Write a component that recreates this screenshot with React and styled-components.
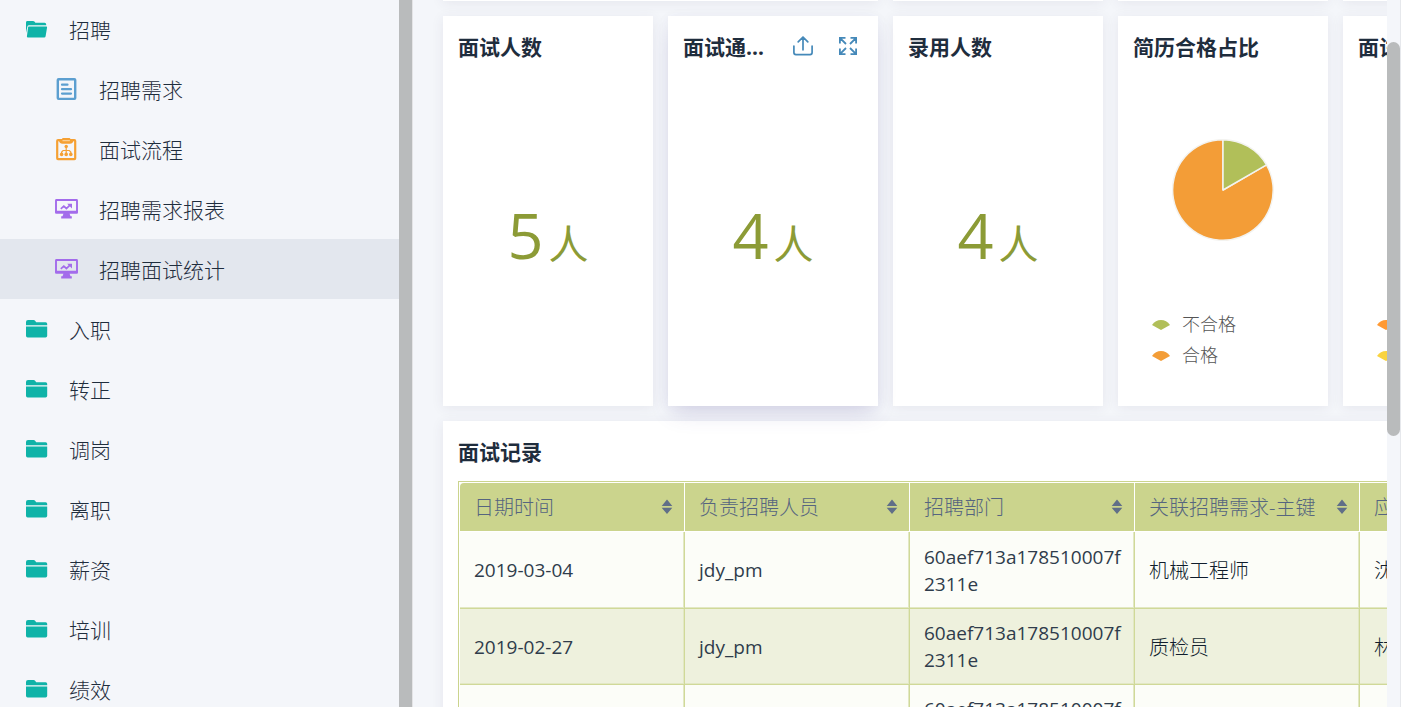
import { useState } from 'react';
import styled, { createGlobalStyle } from 'styled-components';

const GlobalStyle = createGlobalStyle`
  * {
    box-sizing: border-box;
  }
  body {
    margin: 0;
    background: #fff;
    color: #1f2d3d;
    font-family: "Open Sans", "Noto Sans CJK SC", sans-serif;
    overflow: hidden;
  }
`;

const TEAL = '#0fb3a8';
const BLUE = '#5c9fd0';
const ORANGE = '#f5a033';
const PURPLE = '#a36ceb';

const FolderIcon = () => (
    <svg width="24" height="20" viewBox="-2 0 24 20" fill={TEAL}>
        <path d="M0 6.2V3Q0 1 2 1h5.6q.8 0 1.3.6l1.3 1.6H19.600q1.600 0 1.600 1.600v1.400z" />
        <path d="M0 7.400h21.200v9.400q0 1.700-1.700 1.700H1.700Q0 18.500 0 16.800z" />
    </svg>
);

const OpenFolderIcon = () => (
    <svg width="24" height="20" viewBox="-2 0 24 20" fill={TEAL}>
        <path d="M0 14V3.400Q0 2 1.400 2H7q1 0 1.400.6l1 1.200h9.200q1.600 0 1.600 1.600v.8H3.200q-1.600 0-1.800 1.400z" />
        <path d="M2.800 7.400h17.600q.8 0 .7.8l-1.500 9q-.2 1.200-1.400 1.200H1.600q-.8 0-.7-.8l1.200-9.400q.1-.8.7-.8z" />
    </svg>
);

const FormIcon = () => (
    <svg width="24" height="24" viewBox="0 0 24 24" fill="none" stroke={BLUE} strokeWidth="2.400">
        <rect x="3.800" y="2.200" width="17.400" height="19.700" rx=".8" />
        <path d="M8 7.700h5.500M8 12.200h9M8 16.600h9" strokeWidth="2.200" strokeLinecap="round" />
    </svg>
);

const FlowIcon = () => (
    <svg width="24" height="24" viewBox="0 0 24 24" fill="none" stroke={ORANGE}>
        <rect x="3.200" y="3.100" width="18" height="19" rx=".8" strokeWidth="2.200" />
        <path d="M8 3V2q0-1 1.200-1h6q1.200 0 1.200 1v1h3q0 3.800-3.600 3.800H8.600Q5 6.800 5 3z" fill={ORANGE} stroke="none" />
        <path d="M8.500 3.700h7.400" stroke="#fbd9ab" strokeWidth="1" />
        <path d="M12.200 9.500v7.500M7.600 17v-2l1.500-1.500h6.200l1.500 1.500v2" strokeWidth="1.200" />
        <g fill={ORANGE} stroke="none">
            <circle cx="12.200" cy="9.400" r="1.700" />
            <circle cx="7.600" cy="17.400" r="1.800" />
            <circle cx="12.200" cy="17.400" r="1.800" />
            <circle cx="16.800" cy="17.400" r="1.800" />
        </g>
    </svg>
);

const ReportIcon = () => (
    <svg width="24" height="24" viewBox="0 0 24 24" fill="none" stroke={PURPLE}>
        <rect x="2" y="3" width="21" height="12.500" rx=".4" strokeWidth="1.900" />
        <path d="M1.200 13.800h22.600v2.700H1.200zM9.500 16.500h6l1 2.700h1.300V21.500H7.200v-2.300h1.300z" fill={PURPLE} stroke="none" />
        <path d="M6.800 11.800l3-2.600 2.600 2.300 3.800-3.600" strokeWidth="1.700" />
        <path d="M13.200 6.800h4.800v4.800z" fill={PURPLE} stroke="none" />
    </svg>
);

const ExportIcon = () => (
    <svg width="20" height="20" viewBox="0 0 20 20" fill="none" stroke="currentColor" strokeWidth="1.700" strokeLinecap="round" strokeLinejoin="round">
        <path d="M.9 10v6.600q0 2 2 2h14.200q2 0 2-2V10M10 13.800V1.200M5.200 5.800L10 1l4.800 4.800" />
    </svg>
);

const ExpandIcon = () => (
    <svg width="20" height="20" viewBox="0 0 20 20" fill="none" stroke="currentColor" strokeWidth="1.800">
        <path d="M7.500 1.900H1.900v5.600M1.900 1.900L8 8M12.500 1.900h5.600v5.600M18.100 1.900L12 8M7.500 18.100H1.900v-5.600M1.900 18.100L8 12M12.500 18.100h5.600v-5.600M18.100 18.100L12 12" />
    </svg>
);

const SortIcon = () => (
    <svg width="12" height="16" viewBox="0 0 12 16" fill="#606f88">
        <path d="M6 .5L11.300 7H.7zM.7 8.800h10.600L6 15z" />
    </svg>
);

const PieChart = () => (
    <svg width="102" height="102" viewBox="0 0 102 102" stroke="#f3f3f0" strokeWidth="1.500" strokeLinejoin="round">
        <path d="M51 51V.7A50.300 50.300 0 1 0 94.500 25.900z" fill="#f39d37" />
        <path d="M51 51V.7A50.300 50.300 0 0 1 94.500 25.900z" fill="#b1bf59" />
    </svg>
);

const LegendMark = ({ color }) => (
    <svg width="18" height="10" viewBox="0 0 18 10" fill={color}>
        <path d="M0 5Q3.500 0 9 0t9 5l-9 5z" />
    </svg>
);

const menu = [
    { name: '招聘', icon: OpenFolderIcon },
    { name: '招聘需求', icon: FormIcon, child: true },
    { name: '面试流程', icon: FlowIcon, child: true },
    { name: '招聘需求报表', icon: ReportIcon, child: true },
    { name: '招聘面试统计', icon: ReportIcon, child: true },
    { name: '入职', icon: FolderIcon },
    { name: '转正', icon: FolderIcon },
    { name: '调岗', icon: FolderIcon },
    { name: '离职', icon: FolderIcon },
    { name: '薪资', icon: FolderIcon },
    { name: '培训', icon: FolderIcon },
    { name: '绩效', icon: FolderIcon },
];

// latin columns hold dates, accounts and ids
const columns = [
    { name: '日期时间', latin: true },
    { name: '负责招聘人员', latin: true },
    { name: '招聘部门', latin: true },
    { name: '关联招聘需求-主键' },
    { name: '应聘者' },
];

const records = [
    ['2019-03-04', 'jdy_pm', '60aef713a178510007f2311e', '机械工程师', '沈'],
    ['2019-02-27', 'jdy_pm', '60aef713a178510007f2311e', '质检员', '林'],
    ['', '', '60aef713a178510007f2311e', '', ''],
];

const NumberCard = ({ title, value, active }) => (
    <Card $active={active}>
        <CardHead>
            <CardTitle>{title}</CardTitle>
            {active && (
                <Tools>
                    <ToolButton type="button" aria-label="导出"><ExportIcon /></ToolButton>
                    <ToolButton type="button" aria-label="全屏"><ExpandIcon /></ToolButton>
                </Tools>
            )}
        </CardHead>
        <Figure>
            {value}
            <Unit>人</Unit>
        </Figure>
    </Card>
);

const PieCard = ({ title, legend }) => (
    <Card>
        <CardHead>
            <CardTitle>{title}</CardTitle>
        </CardHead>
        <ChartArea>
            <PieChart />
        </ChartArea>
        <Legend>
            {legend.map((item) => (
                <LegendItem key={item.name}>
                    <LegendMark color={item.color} />
                    <LegendText>{item.name}</LegendText>
                </LegendItem>
            ))}
        </Legend>
    </Card>
);

const App = () => {
    const [current, setCurrent] = useState('招聘面试统计');

    return (
        <Page>
            <GlobalStyle />
            <Sidebar>
                {menu.map(({ name, icon: Icon, child }) => (
                    <MenuItem
                        key={name}
                        type="button"
                        $child={child}
                        $active={name === current}
                        onClick={() => setCurrent(name)}
                    >
                        <MenuIcon><Icon /></MenuIcon>
                        <MenuText>{name}</MenuText>
                    </MenuItem>
                ))}
            </Sidebar>
            <SideScrollbar />
            <Main>
                <Board>
                    <TopCard $span={2} />
                    <TopCard />
                    <TopCard />
                    <TopCard $span={2} />
                    <NumberCard title="面试人数" value={5} />
                    <NumberCard title="面试通过人数" value={4} active />
                    <NumberCard title="录用人数" value={4} />
                    <PieCard
                        title="简历合格占比"
                        legend={[{ name: '不合格', color: '#b1bf59' }, { name: '合格', color: '#f39d37' }]}
                    />
                    <PieCard
                        title="面试通过占比"
                        legend={[{ name: '未通过', color: '#ff9933' }, { name: '通过', color: '#f9d340' }]}
                    />
                    <TableCard>
                        <CardHead>
                            <CardTitle>面试记录</CardTitle>
                        </CardHead>
                        <TableFrame>
                            <Table>
                                <thead>
                                    <tr>
                                        {columns.map(({ name }) => (
                                            <HeadCell key={name}>
                                                <HeadInner>
                                                    {name}
                                                    <SortIcon />
                                                </HeadInner>
                                            </HeadCell>
                                        ))}
                                    </tr>
                                </thead>
                                <tbody>
                                    {records.map((row, i) => (
                                        <Row key={i}>
                                            {row.map((text, j) => (
                                                <Cell key={j} $latin={columns[j].latin}>{text}</Cell>
                                            ))}
                                        </Row>
                                    ))}
                                </tbody>
                            </Table>
                        </TableFrame>
                    </TableCard>
                </Board>
            </Main>
            <MainScrollbar>
                <Thumb />
            </MainScrollbar>
        </Page>
    );
};

const Page = styled.div`
  display: flex;
  height: 100vh;
  padding-right: 13px;
  overflow: hidden;
`;

const Sidebar = styled.nav`
  flex: 0 0 399px;
  display: flex;
  flex-direction: column;
  margin-top: -1px;
  background: #f4f6fa;
  overflow: hidden;
`;

const MenuItem = styled.button`
  flex: 0 0 60px;
  display: flex;
  align-items: center;
  gap: 21px;
  padding: 0 24px 0 ${({ $child }) => ($child ? 54 : 24)}px;
  border: 0;
  background: ${({ $active }) => ($active ? '#e3e7ee' : 'transparent')};
  color: #1f2d3d;
  font-family: inherit;
  font-size: 21px;
  font-weight: 300;
  line-height: 30px;
  text-align: left;
  cursor: pointer;
`;

const MenuIcon = styled.span`
  flex: 0 0 24px;
  display: flex;
`;

const MenuText = styled.span`
  padding-top: 2px;
`;

const SideScrollbar = styled.div`
  flex: 0 0 14px;
  background: #b9bbbc;
  border-right: 1px solid #e4e4e6;
`;

const Main = styled.main`
  flex: 1;
  min-width: 0;
  padding-left: 30px;
  background: #f4f6fa;
  overflow: hidden;
`;

// the board is scrolled so only the bottom edge of the first row shows
const Board = styled.div`
  display: grid;
  grid-template-columns: repeat(6, minmax(210px, 1fr));
  gap: 15px;
  margin-top: -59px;
`;

const Card = styled.section`
  position: relative;
  z-index: ${({ $active }) => ($active ? 1 : 0)};
  display: flex;
  flex-direction: column;
  height: 390px;
  padding: 15px;
  background: #fff;
  box-shadow: ${({ $active }) => ($active
        ? '0 10px 22px -5px rgba(80, 66, 150, .2), 0 2px 12px rgba(60, 50, 90, .05)'
        : '0 2px 12px rgba(60, 50, 90, .08)')};
`;

const TopCard = styled.div`
  grid-column: span ${({ $span = 1 }) => $span};
  height: 60px;
  background: #fff;
  box-shadow: 0 2px 12px rgba(60, 50, 90, .08);
`;

const TableCard = styled.section`
  grid-column: 1 / -1;
  padding: 15px;
  background: #fff;
  box-shadow: 0 2px 12px rgba(60, 50, 90, .08);
`;

const CardHead = styled.header`
  display: flex;
  align-items: center;
  height: 33px;
  margin-bottom: 12px;
`;

const CardTitle = styled.h2`
  flex: 1;
  min-width: 0;
  margin: 0;
  font-size: 21px;
  font-weight: 700;
  line-height: 33px;
  overflow: hidden;
  text-overflow: ellipsis;
  white-space: nowrap;
`;

const Tools = styled.div`
  display: flex;
  gap: 25px;
  padding: 0 5px 4px 25px;
`;

const ToolButton = styled.button`
  display: flex;
  padding: 0;
  border: 0;
  background: none;
  color: #4589b9;
  cursor: pointer;
`;

const Figure = styled.p`
  flex: 1;
  display: flex;
  align-items: baseline;
  justify-content: center;
  gap: 5px;
  margin: 0;
  padding-top: 114px;
  color: #8c9b36;
  font-size: 63px;
  line-height: 90px;
`;

const Unit = styled.span`
  font-size: 40px;
`;

const ChartArea = styled.div`
  display: flex;
  justify-content: center;
  padding-top: 63px;
`;

const Legend = styled.ul`
  margin: 68px 0 0;
  padding: 0 0 0 19px;
  list-style: none;
`;

const LegendItem = styled.li`
  display: flex;
  align-items: center;
  gap: 12px;
  height: 31px;
  color: #555;
  font-size: 18px;
  font-weight: 300;
  line-height: 26px;
`;

const LegendText = styled.span`
  padding-bottom: 1px;
`;

const TableFrame = styled.div`
  border: 1px solid #cbd48d;
  padding: 1px;
`;

const Table = styled.table`
  width: 100%;
  border-collapse: separate;
  border-spacing: 0;
  table-layout: fixed;
  font-size: 20px;
  font-weight: 300;
  line-height: 27px;
`;

const HeadCell = styled.th`
  width: 225px;
  height: 49px;
  padding: 0 11px 0 14px;
  background: #cbd48d;
  border-right: 1px solid #fff;
  border-bottom: 1px solid #fff;
  color: #56657f;
  font-weight: 300;
  text-align: left;
  &:first-child {
    border-top-left-radius: 4px;
  }
  &:last-child {
    width: auto;
  }
`;

const HeadInner = styled.div`
  display: flex;
  align-items: center;
  justify-content: space-between;
  white-space: nowrap;
`;

const Row = styled.tr`
  background: #fcfdf8;
  &:nth-child(even) {
    background: #eef1dd;
  }
`;

const Cell = styled.td`
  height: 76px;
  padding: 11px 10px 10px 14px;
  border-right: 1px solid #d0d998;
  border-bottom: 1px solid #d0d998;
  box-shadow: inset -1px -1px 0 #e2e8c4;
  color: ${({ $latin }) => ($latin ? '#2f3c4b' : '#101d2d')};
  font-size: ${({ $latin }) => ($latin ? 19 : 20)}px;
  font-weight: ${({ $latin }) => ($latin ? 400 : 300)};
  word-break: break-all;
  ${Row}:first-child > & {
    height: 77px;
  }
`;

const MainScrollbar = styled.div`
  flex: 0 0 14px;
  padding-top: 42px;
  background: #f4f6fa;
  border-right: 1px solid #e6e8ec;
`;

const Thumb = styled.div`
  height: 394px;
  border-radius: 7px;
  background: #b9bbbc;
`;

export default App;
